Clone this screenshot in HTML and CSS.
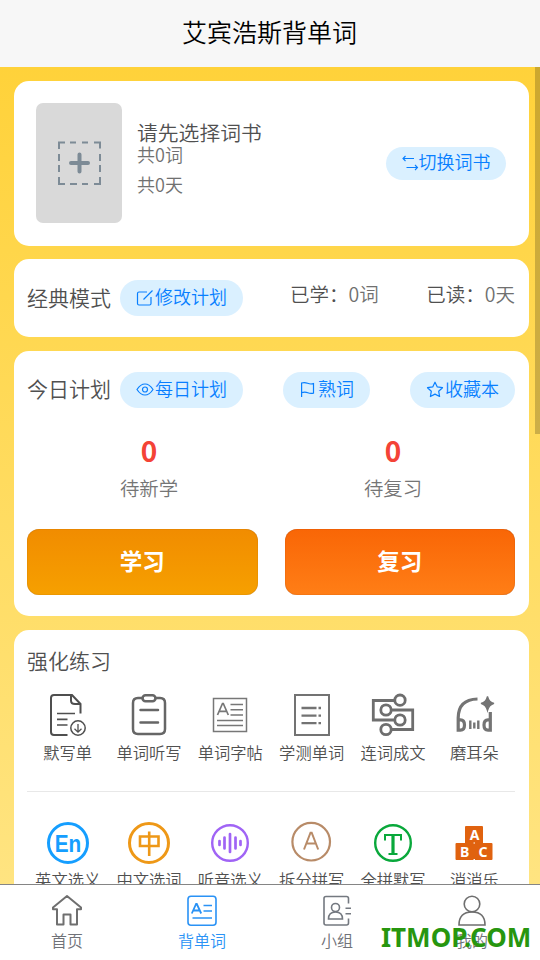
FILE: index.html
```html
<!DOCTYPE html>
<html lang="zh-CN">
<head>
<meta charset="utf-8">
<title>艾宾浩斯背单词</title>
<link rel="stylesheet" href="styles.css">
</head>
<body>
<header class="header">艾宾浩斯背单词</header>
<main class="content">
  <div class="scrollbar"></div>
  <section class="card book">
    <div class="cover">
      <svg width="44" height="44" viewBox="0 0 44 44" fill="none" stroke="#7d8b96" stroke-width="2">
        <path d="M2 8V1.500h6M13 1.500h6M25 1.500h6M37 1.500h6v6M43 13v7M43 24v7M43 36v7h-6M31 43h-6M20 43h-7M8 43H2v-7M2 31v-7M2 20v-7"/>
        <path d="M22.500 13.500v17M14 22h17" stroke-width="4" stroke-linecap="round"/>
      </svg>
    </div>
    <div class="book-info">
      <div class="book-name">请先选择词书</div>
      <div class="book-meta">共0词</div>
      <div class="book-meta second">共0天</div>
    </div>
    <div class="pill switch">
      <svg width="17" height="17" viewBox="0 0 17 17" fill="none" stroke="#087fff" stroke-width="1.100"><path d="M12 3.500H1M3.500 1L1 3.500 3.500 6M4.500 12.500h11M13 10l2.500 2.500L13 15"/></svg><span>切换词书</span>
    </div>
  </section>

  <section class="card mode">
    <h2>经典模式</h2>
    <div class="pill tall">
      <svg width="18" height="18" viewBox="0 0 18 18" fill="none" stroke="#087fff" stroke-width="1.200"><path d="M11 3H3Q1.500 3 1.500 4.500v10Q1.500 16 3 16h10.500q1.500 0 1.500-1.500V8M7.500 10.500L16.500 1.500"/></svg><span>修改计划</span>
    </div>
    <div class="stat learned">已学：<em>0词</em></div>
    <div class="stat read">已读：<em>0天</em></div>
  </section>

  <section class="card plan">
    <div class="plan-head">
      <h2>今日计划</h2>
      <div class="pill tall">
        <svg width="18" height="18" viewBox="0 0 18 18" fill="none" stroke="#087fff" stroke-width="1.200"><path d="M1 8.500Q4.500 3 9 3t8 5.500Q13.500 14 9 14T1 8.500z"/><circle cx="9" cy="8.500" r="2.500"/></svg><span>每日计划</span>
      </div>
      <div class="pill tall known">
        <svg width="18" height="18" viewBox="0 0 18 18" fill="none" stroke="#087fff" stroke-width="1.200"><path d="M2.600 16V2q3-.9 6 .3t5.900.3v9.500q-3 .7-5.700-.4t-6.200-.1"/></svg><span>熟词</span>
      </div>
      <div class="pill tall fav">
        <svg width="18" height="18" viewBox="0 0 18 18" fill="none" stroke="#087fff" stroke-width="1.200" stroke-linejoin="round"><path d="M9 1.200l2.300 4.700 5.200.8-3.800 3.600.9 5.200L9 13.100l-4.600 2.400.9-5.200L1.500 6.700l5.200-.8z"/></svg><span>收藏本</span>
      </div>
    </div>
    <div class="counts">
      <div class="count"><b>0</b><span>待新学</span></div>
      <div class="count"><b>0</b><span>待复习</span></div>
    </div>
    <div class="actions">
      <button class="btn study">学习</button>
      <button class="btn review">复习</button>
    </div>
  </section>

  <section class="card practice">
    <h2>强化练习</h2>
    <div class="grid">
      <div class="item">
        <svg width="44" height="44" viewBox="0 0 44 44" fill="none" stroke="#4f4f4f" stroke-width="2"><path d="M21.500 42H8q-3 0-3-3V5q0-3 3-3h18l8.500 9v9.500M25 2v5.500q0 3.500 4 3.500h5.500" /><path d="M11 20.500h18M11 26.300h10.500M11 32h10.500" stroke-width="1.700"/><circle cx="32" cy="35" r="7.200" stroke-width="1.500"/><path d="M32 31v8M28.500 35.800L32 39.200l3.500-3.400" stroke-width="1.300"/></svg>
        <span>默写单</span>
      </div>
      <div class="item">
        <svg width="44" height="44" viewBox="0 0 44 44" fill="none" stroke="#666" stroke-width="2.500" stroke-linecap="round"><path d="M15.500 5H11q-5 0-5 5v26q0 5 5 5h22q5 0 5-5V10q0-5-5-5h-4.500M13.500 17h17.500M13.500 29.500h17.500"/><rect x="15.500" y="2.200" width="13" height="6" rx="3"/></svg>
        <span>单词听写</span>
      </div>
      <div class="item">
        <svg width="44" height="44" viewBox="0 0 44 44" fill="none" stroke="#777" stroke-width="1.500"><path d="M5.500 5.500h33v33h-33zM22.500 11.500H35M22.500 16.700H35M22.500 22H35M9 27.500h26M9 32.500h26"/><path d="M9.500 22l5-11.500h.8l5 11.500M11.300 18.300h7.200" stroke-width="1.700"/></svg>
        <span>单词字帖</span>
      </div>
      <div class="item">
        <svg width="44" height="44" viewBox="0 0 44 44" fill="none" stroke="#737373" stroke-width="2"><path d="M5 2h34v40H5z"/><path d="M11.500 15h15M11.500 22.600h15M11.500 30.200h15M28.500 15h2.500M28.500 22.600h2.500M28.500 30.200h2.500" stroke-width="2.300"/></svg>
        <span>学测单词</span>
      </div>
      <div class="item">
        <svg width="44" height="44" viewBox="0 0 44 44" fill="none" stroke="#6e6e6e" stroke-width="2.800"><path d="M24 7.500H2.300V27H24M12 17h29.700v19.500H12"/><g fill="#fff"><circle cx="29" cy="7.200" r="5.200"/><circle cx="15" cy="17" r="5.200"/><circle cx="29" cy="27" r="5.200"/><circle cx="15" cy="36.500" r="5.200"/></g></svg>
        <span>连词成文</span>
      </div>
      <div class="item">
        <svg width="44" height="44" viewBox="0 0 44 44" fill="none" stroke="#747474" stroke-width="3.200"><path d="M25.500 6Q6.200 6.500 6.200 25v12.200h2.300q4 0 4-5.200t-4-5.200H6.200M38.300 19v18.200H36q-4 0-4-5.200t4-5.200h2.300"/><path d="M18.300 27.500v8.500M22.300 29.500v6M26.300 27.500v8.500" stroke-width="2.400"/><path d="M35.500 3.500Q37 9.500 42 10.500q-5 1.500-6.500 7-1.500-5.500-6.500-7Q34 9.500 35.500 3.500z" fill="#747474" stroke-width="1.300"/></svg>
        <span>磨耳朵</span>
      </div>
    </div>
    <div class="divider"></div>
    <div class="grid second-row">
      <div class="item">
        <svg width="44" height="44" viewBox="0 0 44 44"><circle cx="22" cy="22" r="19.500" fill="none" stroke="#159eff" stroke-width="3"/><text x="22" y="30.500" class="g-en" textLength="26.500" lengthAdjust="spacingAndGlyphs">En</text></svg>
        <span>英文选义</span>
      </div>
      <div class="item">
        <svg width="44" height="44" viewBox="0 0 44 44" fill="none" stroke="#ee9817"><circle cx="22" cy="22" r="19.500" stroke-width="3"/><path d="M13 15.500h18.500v9.500H13zM22.200 10.500v24.500" stroke-width="2.600"/></svg>
        <span>中文选词</span>
      </div>
      <div class="item">
        <svg width="44" height="44" viewBox="0 0 44 44" fill="none" stroke="#a064f5"><circle cx="22" cy="22" r="17.800" stroke-width="2.400"/><path d="M11.500 20v4M16.500 16.500v11M22 13v18M27.500 16.500v11M32.500 20v4" stroke-width="2.700" stroke-linecap="round"/></svg>
        <span>听音选义</span>
      </div>
      <div class="item">
        <svg width="44" height="44" viewBox="0 0 44 44" fill="none" stroke="#b88b68"><circle cx="21.200" cy="20.700" r="18.800" stroke-width="2.200"/><path d="M14 28.500l6.500-16.800h1.200l6.500 16.800M16.500 22.500h9.300" stroke-width="2"/></svg>
        <span>拆分拼写</span>
      </div>
      <div class="item">
        <svg width="44" height="44" viewBox="0 0 44 44" fill="none" stroke="#09a83b"><circle cx="22" cy="22" r="17.800" stroke-width="2.400"/><path d="M14 19.500V14h16v5.500" stroke-width="2"/><path d="M22 14v19" stroke-width="3.200"/><path d="M17.500 33h9" stroke-width="2"/></svg>
        <span>全拼默写</span>
      </div>
      <div class="item">
        <svg width="44" height="44" viewBox="0 0 44 44"><path fill="#e0620f" d="M14 5h16q1 0 1 1v16H13V6q0-1 1-1zM4.500 22h17v17h-17q-1 0-1-1V23q0-1 1-1zM21.500 22h18q1 0 1 1v15q0 1-1 1h-18z"/><path d="M21.500 22h1.500M21.500 38.500h1.500" stroke="#fff"/><g class="g-block"><text x="22.500" y="19">A</text><text x="12.700" y="35.500">B</text><text x="31" y="35.500">C</text></g></svg>
        <span>消消乐</span>
      </div>
    </div>
  </section>
</main>
<nav class="tabs">
  <div class="tab">
    <svg width="34" height="34" viewBox="0 0 34 34" fill="none" stroke="#6f6f6f" stroke-width="2" stroke-linejoin="round"><path d="M17 2L3 13.500v1.700h4V30.500h6.500V20.500h7v10H27V15.200h4v-1.700z"/></svg>
    <span>首页</span>
  </div>
  <div class="tab active">
    <svg width="34" height="34" viewBox="0 0 34 34" fill="none" stroke="#2a92f5" stroke-width="1.600"><rect x="3" y="2.300" width="28" height="29" rx="3"/><path d="M18.500 11.500H27M18.500 17H27M7.500 24h19.500" stroke-width="1.500"/><path d="M6.800 19.500l4.300-9.500h.7l4.400 9.500M8.300 16.500h6.300" stroke-width="1.800"/></svg>
    <span>背单词</span>
  </div>
  <div class="tab">
    <svg width="34" height="34" viewBox="0 0 34 34" fill="none" stroke="#747980" stroke-width="1.600"><path d="M28.500 9.500V4.500q0-2-2-2H6q-2 0-2 2v24.500q0 2 2 2h20.500q2 0 2-2V24.500M25.500 14.300H31M25.500 19.700H31"/><circle cx="15.500" cy="13.500" r="4"/><path d="M8.500 25h14q0-7-7-7t-7 7z"/></svg>
    <span>小组</span>
  </div>
  <div class="tab">
    <svg width="34" height="34" viewBox="0 0 34 34" fill="none" stroke="#6f6f6f" stroke-width="1.600"><circle cx="17" cy="10" r="7.800"/><path d="M4 31q0-13 13-13t13 13z"/></svg>
    <span>我的</span>
  </div>
  <div class="watermark">ITMOP.COM</div>
</nav>
</body>
</html>
```
FILE: styles.css
```css
* { box-sizing: border-box; }
body {
  margin: 0;
  width: 540px;
  height: 960px;
  overflow: hidden;
  display: flex;
  flex-direction: column;
  font-family: "Noto Sans CJK SC", sans-serif;
  font-weight: 350;
  color: #505050;
  background: #fff;
}
svg { display: block; flex: none; }
h2 { margin: 0; font-size: 21px; line-height: 30px; font-weight: inherit; white-space: nowrap; }
.header {
  flex: none;
  height: 67px;
  line-height: 63px;
  padding-right: 1px;
  text-align: center;
  font-size: 25px;
  color: #000;
  background: #f7f7f7;
}
.content {
  position: relative;
  flex: none;
  height: 817px;
  overflow: hidden;
  padding: 14px 11px 0 14px;
  background: linear-gradient(#ffd23a, #ffe481);
}
.scrollbar {
  position: absolute;
  top: 0;
  right: 0;
  width: 5px;
  height: 367px;
  background: rgba(0, 0, 0, .2);
}
.card { background: #fff; border-radius: 15px; }
.book { display: flex; height: 165px; padding: 22px 23px 0 22px; margin-bottom: 13px; }
.cover {
  display: flex;
  align-items: center;
  justify-content: center;
  width: 86px;
  height: 120px;
  border-radius: 7px;
  background: #d9d9d9;
}
.book-info { flex: 1; padding: 16px 0 0 15px; }
.book-name { font-size: 20.8px; line-height: 26px; }
.book-meta { font-size: 18px; line-height: 18px; color: #707070; }
.second { margin-top: 12px; }
.pill {
  display: flex;
  align-items: center;
  justify-content: center;
  gap: 1px;
  border-radius: 18px;
  background: #daf0ff;
  color: #087fff;
  font-size: 18px;
  line-height: 20px;
  white-space: nowrap;
}
.pill span { padding-bottom: 4px; }
.switch { width: 120px; height: 33px; margin-top: 44px; gap: 0; }
.switch span { padding-bottom: 5px; }
.tall { width: 123px; height: 36px; }
.mode { display: flex; align-items: center; height: 78px; padding: 0 14px 0 13px; margin-bottom: 14px; }
.mode h2, .plan h2 { width: 93px; padding-bottom: 3px; }
.plan .plan-head h2 { padding-bottom: 5px; }
.stat { font-size: 19.5px; line-height: 26px; white-space: nowrap; padding-bottom: 8px; }
.stat em { font-style: normal; color: #707070; }
.learned { margin-left: 47px; }
.read { margin-left: auto; }
.plan { height: 265px; padding: 21px 14px 0 13px; margin-bottom: 14px; }
.plan-head { display: flex; align-items: center; height: 36px; }
.plan-head .known { width: 87px; margin-left: 40px; }
.plan-head .fav { width: 105px; margin-left: auto; }
.counts { display: grid; grid-template-columns: 1fr 1fr; height: 121px; padding-top: 24px; }
.count { display: flex; flex-direction: column; align-items: center; }
.count b { font-size: 28px; line-height: 36px; font-weight: 700; color: #f44336; }
.count span { font-size: 19.4px; line-height: 28px; margin-top: 6px; color: #757575; }
.actions { display: flex; gap: 27px; }
.btn {
  flex: 1;
  height: 66px;
  padding: 0 0 3px;
  border: 0;
  border-radius: 12px;
  font: 700 22.5px/63px "Noto Sans CJK SC", sans-serif;
  color: #fff;
}
.study { background: linear-gradient(#f18c00, #f6a000); box-shadow: inset 0 0 1px rgba(120, 60, 0, .7); }
.review { background: linear-gradient(#f96606, #ff7e16); box-shadow: inset 0 0 1px rgba(120, 40, 0, .7); }
.practice { height: 300px; padding: 15px 14px 0 13px; }
.grid { display: grid; grid-template-columns: repeat(6, 1fr); padding-top: 18px; }
.item { display: flex; flex-direction: column; align-items: center; }
.item span { font-size: 16.300px; line-height: 24px; margin-top: 3px; white-space: nowrap; }
.divider { height: 1px; margin-top: 27px; background: #e8e8e8; }
.second-row { padding-top: 29px; }
.second-row span { margin-top: 2px; }
.g-en { font: 700 24px "Liberation Sans", sans-serif; fill: #159eff; text-anchor: middle; }
.g-block { font: 700 14px "Noto Sans", sans-serif; fill: #fff; text-anchor: middle; }
.tabs {
  position: relative;
  display: grid;
  grid-template-columns: repeat(4, 1fr);
  height: 76px;
  border-top: 1px solid #858585;
  background: #fff;
}
.tab { display: flex; flex-direction: column; align-items: center; padding: 9px 1px 0 0; font-size: 16px; line-height: 24px; color: #707278; }
.active { color: #2a92f5; }
.watermark {
  position: absolute;
  left: 381px;
  top: 34px;
  font: 700 26px/36px "Noto Sans", sans-serif;
  color: #27960f;
  white-space: nowrap;
}
```
